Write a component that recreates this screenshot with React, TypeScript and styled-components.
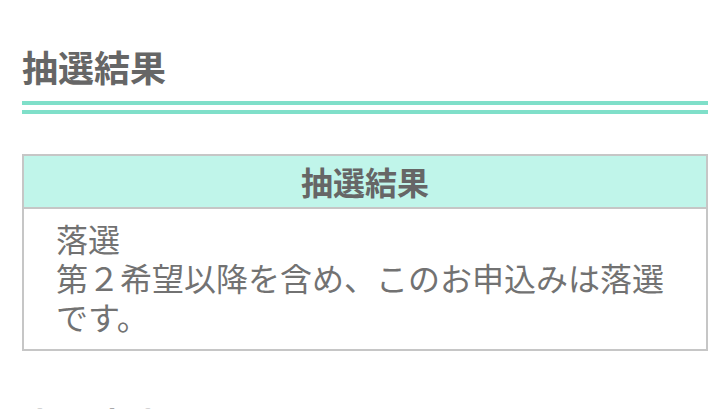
import React from "react";
import { styled, createGlobalStyle } from "styled-components";

const GlobalStyle = createGlobalStyle`
  html, body {
    margin: 0;
    padding: 0;
    background: #ffffff;
  }
  body {
    font-family: "Noto Sans CJK JP", "Noto Sans", sans-serif;
    color: #666666;
  }
`;

const Page = styled.main`
  width: 728px;
  height: 409px;
  overflow: hidden;
  padding: 0 20px 0 22px;
  box-sizing: border-box;
`;

const SectionTitle = styled.h2<{ $top: number }>`
  margin: ${(p) => p.$top}px 0 0;
  font-size: 36px;
  line-height: 44px;
  font-weight: 700;
  color: #666666;
`;

const DoubleRule = styled.div`
  margin-top: 13px;
  height: 5px;
  border-top: 4px solid #7fdfc9;
  border-bottom: 4px solid #7fdfc9;
`;

const ResultTable = styled.section`
  margin-top: 40px;
  border: 2px solid #c6c6c6;
`;

const TableHead = styled.div`
  background: #c0f5ea;
  border-bottom: 2px solid #c6c6c6;
  padding: 8px 0;
  text-align: center;
  font-size: 32px;
  line-height: 35px;
  font-weight: 700;
  color: #666666;
`;

const TableBody = styled.div`
  padding: 10px 32px 13px 32px;
  font-size: 32px;
  line-height: 39px;
  font-weight: 400;
  color: #727272;
`;

const App = () => {
  return (
    <>
      <GlobalStyle />
      <Page>
        <SectionTitle $top={44}>抽選結果</SectionTitle>
        <DoubleRule />
        <ResultTable>
          <TableHead>抽選結果</TableHead>
          <TableBody>
            落選
            <br />
            第２希望以降を含め、このお申込みは落選です。
          </TableBody>
        </ResultTable>
        <SectionTitle $top={51}>申込内容</SectionTitle>
      </Page>
    </>
  );
};

export default App;
